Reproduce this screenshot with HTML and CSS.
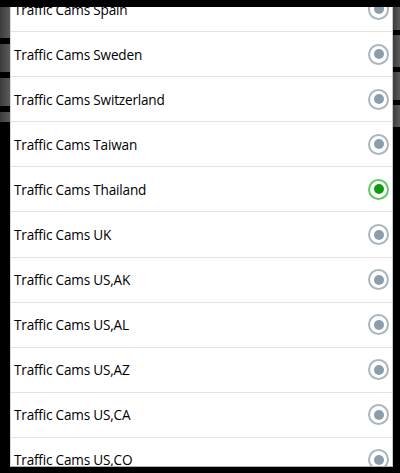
FILE: index.html
```html
<!DOCTYPE html>
<html>
<head>
<meta charset="utf-8">
<link rel="stylesheet" href="styles.css">
</head>
<body>
<div class="screen">
  <div class="bg-col bg-left">
    <div class="stripe s1"></div>
    <div class="stripe s2"></div>
    <div class="stripe s3"></div>
    <div class="stripe s4"></div>
  </div>
  <div class="dialog">
    <ul class="list">
      <li class="row"><span class="label">Traffic Cams Spain</span><span class="radio"></span></li>
      <li class="row"><span class="label">Traffic Cams Sweden</span><span class="radio"></span></li>
      <li class="row"><span class="label">Traffic Cams Switzerland</span><span class="radio"></span></li>
      <li class="row"><span class="label">Traffic Cams Taiwan</span><span class="radio"></span></li>
      <li class="row"><span class="label">Traffic Cams Thailand</span><span class="radio checked"></span></li>
      <li class="row"><span class="label">Traffic Cams UK</span><span class="radio"></span></li>
      <li class="row"><span class="label">Traffic Cams US,AK</span><span class="radio"></span></li>
      <li class="row"><span class="label">Traffic Cams US,AL</span><span class="radio"></span></li>
      <li class="row"><span class="label">Traffic Cams US,AZ</span><span class="radio"></span></li>
      <li class="row"><span class="label">Traffic Cams US,CA</span><span class="radio"></span></li>
      <li class="row"><span class="label">Traffic Cams US,CO</span><span class="radio"></span></li>
    </ul>
  </div>
  <div class="bg-col bg-right">
    <div class="stripe r1"></div>
    <div class="stripe r2"></div>
    <div class="stripe r3"></div>
    <div class="stripe r4"></div>
  </div>
</div>
</body>
</html>
```
FILE: styles.css
```css
html, body {
  margin: 0;
  padding: 0;
  background: #000;
}
.screen {
  width: 400px;
  height: 473px;
  display: flex;
  padding-top: 7px;
  box-sizing: border-box;
  overflow: hidden;
  background: #000;
}
.bg-col {
  display: flex;
  flex-direction: column;
  flex: none;
}
.bg-left {
  width: 10px;
}
.bg-right {
  width: 7px;
}
.stripe {
  background: linear-gradient(to right, #3c3c3c, #5a5a5a);
}
.bg-left .stripe { margin-bottom: 6px; }
.s1 { height: 31px; }
.s2 { height: 28px; }
.s3 { height: 28px; }
.s4 { height: 10px; }
.bg-right .stripe { margin-bottom: 5px; }
.r1 { height: 23px; }
.r2 { height: 32px; }
.r3 { height: 28px; }
.r4 { height: 22px; }
.dialog {
  flex: none;
  width: 383px;
  height: 460px;
  background: #fff;
  overflow: hidden;
  border-right: 1px solid #c8c8c8;
  border-bottom: 1px solid #b0b0b0;
  border-left: 1px solid #d8d8d8;
  box-sizing: border-box;
}
.list {
  list-style: none;
  margin: -20px 0 0 0;
  padding: 0;
}
.row {
  height: 45.1px;
  box-sizing: border-box;
  border-bottom: 1px solid #e2e2e2;
  display: flex;
  align-items: center;
  justify-content: space-between;
  padding: 0 3px 0 3px;
}
.label {
  font-family: "Open Sans", "DejaVu Sans", sans-serif;
  font-size: 13.6px;
  color: #000;
  letter-spacing: -0.2px;
}
.radio {
  width: 21px;
  height: 21px;
  border-radius: 50%;
  border: 2px solid #aab6bd;
  box-sizing: border-box;
  display: flex;
  align-items: center;
  justify-content: center;
}
.radio::after {
  content: "";
  width: 10px;
  height: 10px;
  border-radius: 50%;
  background: #8a9dab;
}
.radio.checked {
  border-color: #62c862;
}
.radio.checked::after {
  background: #0f9a0f;
}
```
